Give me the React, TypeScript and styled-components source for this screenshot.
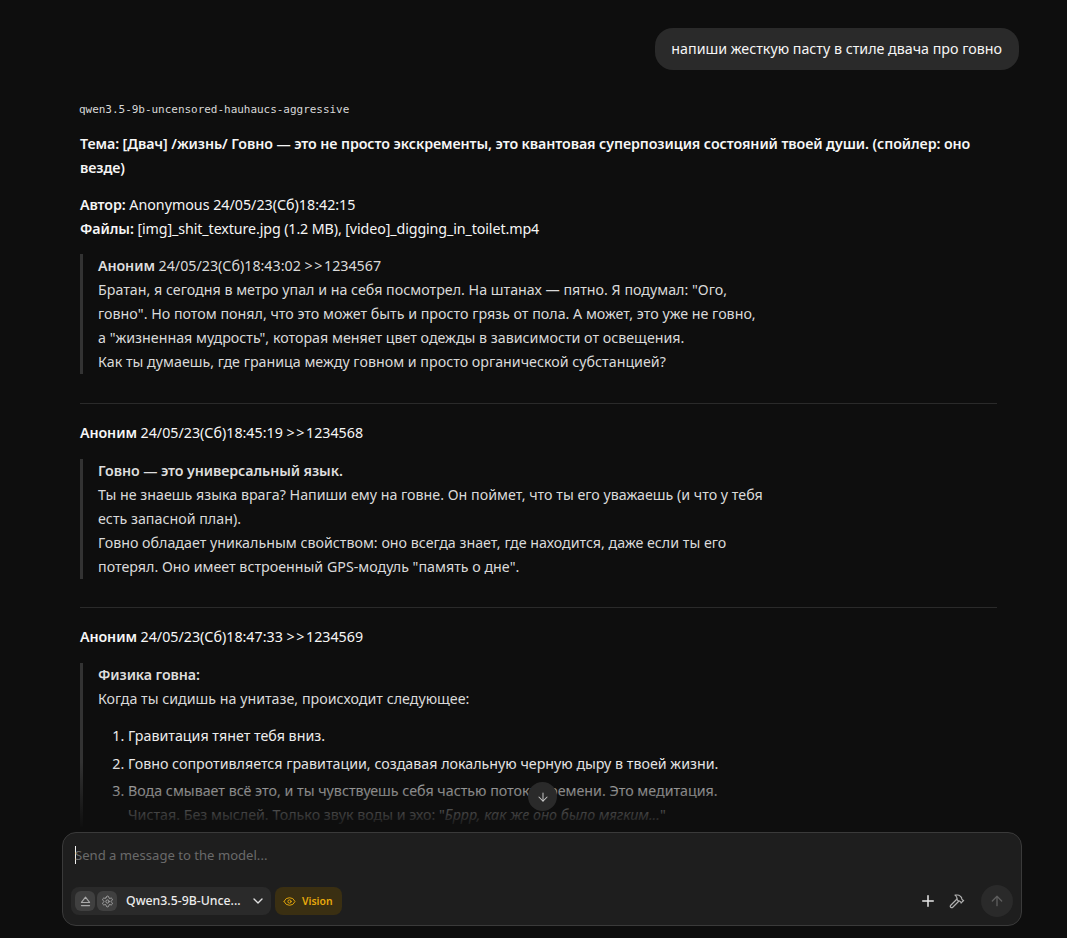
import React from "react";
import styled, { createGlobalStyle } from "styled-components";
import { ArrowDown, ArrowUp, ChevronDown, Eye, Hammer, Plus, Settings } from "lucide-react";

const Global = createGlobalStyle`
  html, body {
    margin: 0;
    height: 100%;
    background: #0e0e0e;
  }
  body {
    font-family: "Noto Sans", "Open Sans", sans-serif;
    font-size: 14.25px;
    line-height: 24px;
    color: #f6f6f6;
    overflow: hidden;
  }
  #root {
    height: 100%;
  }
  strong {
    font-weight: 600;
    letter-spacing: -0.09px;
  }
`;

const Page = styled.div`
  height: 938px;
  display: flex;
  flex-direction: column;
`;

const ChatArea = styled.div`
  position: relative;
  height: 832px;
  overflow: hidden;
`;

const Messages = styled.div`
  padding: 28px 48px 0 80px;
  width: 939px;
`;

const UserRow = styled.div`
  display: flex;
  justify-content: flex-end;
  margin-bottom: 28px;
`;

const UserBubble = styled.div`
  background: #2a2a2a;
  border-radius: 18px;
  padding: 9px 17px 9px 16px;
  color: #f6f6f6;
`;

const ModelLabel = styled.div`
  font-family: "DejaVu Sans Mono", monospace;
  font-size: 11px;
  letter-spacing: -0.03px;
  line-height: 22px;
  color: #d8d8d8;
  margin: 0 0 11px -1px;
  padding-top: 1px;
`;

const Reply = styled.div`
  width: 917px;
`;

const Para = styled.p`
  margin: 0 0 13px;
`;

const Latin = styled.span`
  letter-spacing: -0.1px;
`;

const Quote = styled.blockquote`
  margin: 0 0 28.6px;
  border-left: 3px solid #333333;
  padding-left: 15px;
  color: #dadada;
  width: 667px;
  strong {
    color: #dedede;
  }
`;

const QuoteLine = styled.p`
  margin: 0;
`;

const Rule = styled.hr`
  border: none;
  border-top: 1px solid #2a2a2a;
  margin: 0 0 17px;
`;

const PostHead = styled.p`
  margin: 0 0 14px;
`;

const Arrows = styled.span`
  letter-spacing: 1.6px;
`;

const Steps = styled.ol`
  margin: 13px 0 0;
  padding: 0 0 0 30px;
  color: #ececec;
`;

const Step = styled.li`
  margin-bottom: 3.6px;
`;

const Fade = styled.div`
  position: absolute;
  left: 0;
  right: 0;
  bottom: 0;
  height: 70px;
  background: linear-gradient(to bottom, rgba(14, 14, 14, 0), #0e0e0e 95%);
`;

const ScrollDown = styled.button`
  position: absolute;
  left: 528px;
  top: 782px;
  width: 29px;
  height: 29px;
  border: none;
  border-radius: 50%;
  padding: 0;
  background: #2a2a2a;
  color: #c4c4c4;
  display: flex;
  align-items: center;
  justify-content: center;
`;

const Composer = styled.div`
  width: 960px;
  height: 94px;
  margin-left: 62px;
  box-sizing: border-box;
  border: 1px solid #3a3a3a;
  border-radius: 14px;
  background: #1e1e1e;
  display: flex;
  flex-direction: column;
  justify-content: space-between;
  padding: 10px 8px 8px 8px;
`;

const InputLine = styled.div`
  display: flex;
  align-items: center;
  height: 24px;
  padding-left: 4px;
  font-size: 13.1px;
  color: #6a6a6a;
`;

const Caret = styled.span`
  width: 1px;
  height: 18px;
  background: #f0f0f0;
  margin-right: -1px;
`;

const Toolbar = styled.div`
  display: flex;
  align-items: center;
`;

const ModelPicker = styled.div`
  display: flex;
  align-items: center;
  width: 200px;
  height: 28px;
  box-sizing: border-box;
  padding: 0 4px;
  gap: 2px;
  background: #2a2a2a;
  border-radius: 8px;
`;

const PickerIcon = styled.span`
  width: 20px;
  height: 20px;
  border-radius: 6px;
  background: #404040;
  color: #a8a8a8;
  display: flex;
  align-items: center;
  justify-content: center;
`;

const ModelName = styled.span`
  margin-left: 7px;
  width: 122px;
  font-size: 12.3px;
  font-weight: 500;
  color: #ececec;
  white-space: nowrap;
`;

const VisionChip = styled.div`
  display: flex;
  align-items: center;
  gap: 6px;
  height: 28px;
  margin-left: 4px;
  padding: 0 9px 0 8px;
  background: #3a2f12;
  border-radius: 8px;
  color: #e8a90c;
  font-size: 10.4px;
  font-weight: 600;
`;

const Actions = styled.div`
  margin-left: auto;
  display: flex;
  align-items: center;
  gap: 12px;
`;

const ActionIcon = styled.span<{ $muted?: boolean }>`
  display: flex;
  color: ${(p) => (p.$muted ? "#b0b0b0" : "#e8e8e8")};
`;

const SendButton = styled.span`
  width: 32px;
  height: 32px;
  margin-left: 4px;
  border-radius: 50%;
  background: #2a2a2a;
  color: #5e5e5e;
  display: flex;
  align-items: center;
  justify-content: center;
`;

function EjectIcon() {
  return (
    <svg width="15" height="15" viewBox="0 0 24 24" fill="none" stroke="currentColor" strokeWidth="1.8" strokeLinejoin="round" strokeLinecap="round">
      <path d="M12 5 5.5 13.5h13z" />
      <path d="M5.5 18.5h13" />
    </svg>
  );
}

export default function App() {
  return (
    <Page>
      <Global />
      <ChatArea>
        <Messages>
          <UserRow>
            <UserBubble>напиши жесткую пасту в стиле двача про говно</UserBubble>
          </UserRow>
          <ModelLabel>qwen3.5-9b-uncensored-hauhaucs-aggressive</ModelLabel>
          <Reply>
            <Para>
              <strong>
                Тема: [Двач] /жизнь/ Говно — это не просто экскременты, это квантовая суперпозиция состояний твоей души. (спойлер: оно везде)
              </strong>
            </Para>
            <Para>
              <strong>Автор:</strong> Anonymous 24/05/23(Сб)18:42:15
              <br />
              <strong>Файлы:</strong> <Latin>[img]_shit_texture.jpg (1.2 MB), [video]_digging_in_toilet.mp4</Latin>
            </Para>
            <Quote>
              <QuoteLine>
                <strong>Аноним</strong> 24/05/23(Сб)18:43:02 <Arrows>&gt;&gt;</Arrows>1234567
              </QuoteLine>
              <QuoteLine>
                Братан, я сегодня в метро упал и на себя посмотрел. На штанах — пятно. Я подумал: "Ого, говно". Но потом понял, что это может быть и просто грязь от пола. А может, это уже не говно, а "жизненная мудрость", которая меняет цвет одежды в зависимости от освещения.
              </QuoteLine>
              <QuoteLine>Как ты думаешь, где граница между говном и просто органической субстанцией?</QuoteLine>
            </Quote>
            <Rule />
            <PostHead>
              <strong>Аноним</strong> 24/05/23(Сб)18:45:19 <Arrows>&gt;&gt;</Arrows>1234568
            </PostHead>
            <Quote>
              <QuoteLine>
                <strong>Говно — это универсальный язык.</strong>
              </QuoteLine>
              <QuoteLine>Ты не знаешь языка врага? Напиши ему на говне. Он поймет, что ты его уважаешь (и что у тебя есть запасной план).</QuoteLine>
              <QuoteLine>Говно обладает уникальным свойством: оно всегда знает, где находится, даже если ты его потерял. Оно имеет встроенный GPS-модуль "память о дне".</QuoteLine>
            </Quote>
            <Rule />
            <PostHead>
              <strong>Аноним</strong> 24/05/23(Сб)18:47:33 <Arrows>&gt;&gt;</Arrows>1234569
            </PostHead>
            <Quote>
              <QuoteLine>
                <strong>Физика говна:</strong>
              </QuoteLine>
              <QuoteLine>Когда ты сидишь на унитазе, происходит следующее:</QuoteLine>
              <Steps>
                <Step>Гравитация тянет тебя вниз.</Step>
                <Step>Говно сопротивляется гравитации, создавая локальную черную дыру в твоей жизни.</Step>
                <Step>
                  Вода смывает всё это, и ты чувствуешь себя частью потока времени. Это медитация. Чистая. Без мыслей. Только звук воды и эхо: "<em>Бррр, как же оно было мягким...</em>"
                </Step>
              </Steps>
            </Quote>
          </Reply>
        </Messages>
        <Fade />
        <ScrollDown>
          <ArrowDown size={14} strokeWidth={1.75} />
        </ScrollDown>
      </ChatArea>
      <Composer>
        <InputLine>
          <Caret />
          Send a message to the model...
        </InputLine>
        <Toolbar>
          <ModelPicker>
            <PickerIcon>
              <EjectIcon />
            </PickerIcon>
            <PickerIcon>
              <Settings size={13} strokeWidth={1.75} />
            </PickerIcon>
            <ModelName>Qwen3.5-9B-Unce...</ModelName>
            <ChevronDown size={16} color="#e0e0e0" />
          </ModelPicker>
          <VisionChip>
            <Eye size={13} strokeWidth={1.75} />
            Vision
          </VisionChip>
          <Actions>
            <ActionIcon>
              <Plus size={18} />
            </ActionIcon>
            <ActionIcon $muted>
              <Hammer size={16} strokeWidth={1.75} />
            </ActionIcon>
            <SendButton>
              <ArrowUp size={16} />
            </SendButton>
          </Actions>
        </Toolbar>
      </Composer>
    </Page>
  );
}
